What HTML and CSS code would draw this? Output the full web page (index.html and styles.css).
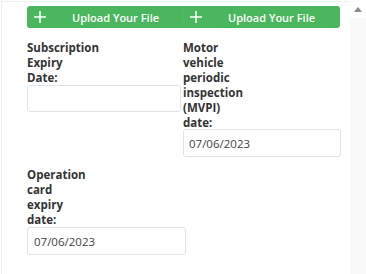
FILE: index.html
```html
<!DOCTYPE html>
<html lang="en">
<head>
  <meta charset="UTF-8" />
  <meta name="viewport" content="width=device-width, initial-scale=1.0"/>
  <title>Vehicle documents</title>
  <link rel="stylesheet" href="styles.css">
</head>
<body>
<div class="panel">
  <div class="content">
    <div class="upload-row">
      <button class="upload-btn upload-first">
        <svg class="plus" viewBox="0 0 14 14" width="14" height="14"><path d="M7 1v12M1 7h12" stroke="#fff" stroke-width="1.6" fill="none"/></svg>
        <span>Upload Your File</span>
      </button>
      <button class="upload-btn">
        <svg class="plus" viewBox="0 0 14 14" width="14" height="14"><path d="M7 1v12M1 7h12" stroke="#fff" stroke-width="1.6" fill="none"/></svg>
        <span>Upload Your File</span>
      </button>
    </div>
    <div class="fields">
      <div class="field">
        <label class="field-label">Subscription<br>Expiry<br>Date:</label>
        <input class="field-input input-narrow" type="text" value="">
      </div>
      <div class="field">
        <label class="field-label">Motor<br>vehicle<br>periodic<br>inspection<br>(MVPI)<br>date:</label>
        <input class="field-input input-mvpi" type="text" value="07/06/2023">
      </div>
      <div class="field">
        <label class="field-label">Operation<br>card<br>expiry<br>date:</label>
        <input class="field-input input-wide" type="text" value="07/06/2023">
      </div>
    </div>
  </div>
  <div class="scrollbar">
    <div class="sb-up"><span class="sb-arrow"></span></div>
    <div class="sb-track"></div>
  </div>
</div>
</body>
</html>
```

FILE: styles.css
```css
body {
  margin: 0;
  background: #fff;
  font-family: 'Open Sans', Arial, sans-serif;
  color: #333;
}
.panel {
  display: flex;
  height: 274px;
  margin-left: 1px;
  border-left: 1px solid #eef0f2;
  box-sizing: border-box;
}
.content {
  flex: 1;
  padding: 4px 0 0 25px;
  border-top: 1px solid #f1f1f1;
  margin-top: 1px;
  box-sizing: border-box;
}
.upload-row {
  display: flex;
  width: 313px;
}
.upload-btn {
  display: flex;
  align-items: center;
  height: 22px;
  padding: 0 0 0 6px;
  border: none;
  background: #4ab75e;
  color: #fff;
  font-family: inherit;
  font-size: 11px;
  font-weight: 600;
  border-radius: 3px;
  width: 156px;
  cursor: pointer;
}
.upload-first {
  width: 157px;
  border-top-right-radius: 0;
  border-bottom-right-radius: 0;
  border-right: 1px solid #50b963;
}
.upload-first + .upload-btn {
  padding-left: 5px;
  border-top-left-radius: 0;
  border-bottom-left-radius: 0;
}
.plus { flex: none; }
.upload-btn span { margin-left: 25px; }
.fields {
  display: grid;
  grid-template-columns: 156px 158px;
  row-gap: 10px;
  margin-top: 12px;
}
.field {
  display: flex;
  flex-direction: column;
  align-items: flex-start;
}
.field-label {
  font-size: 11.5px;
  font-weight: 700;
  line-height: 15px;
  color: #333;
}
.field-input {
  width: 158px;
  height: 28px;
  box-sizing: border-box;
  border: 1px solid #e0e4e8;
  border-radius: 3px;
  padding: 0 5px;
  font-family: inherit;
  font-size: 11.5px;
  color: #444;
  outline: none;
}
.input-narrow { width: 154px; height: 27px; }
.input-mvpi { margin-top: -1px; }
.input-wide { width: 159px; padding-left: 6px; }
.scrollbar {
  width: 16px;
  display: flex;
  flex-direction: column;
}
.sb-up {
  height: 18px;
  display: flex;
  justify-content: center;
  padding-top: 7px;
  box-sizing: border-box;
}
.sb-arrow {
  width: 0; height: 0;
  border-left: 4px solid transparent;
  border-right: 4px solid transparent;
  border-bottom: 5px solid #8c8c8c;
}
.sb-track {
  flex: 1;
  background: #f9f9f9;
}
```
